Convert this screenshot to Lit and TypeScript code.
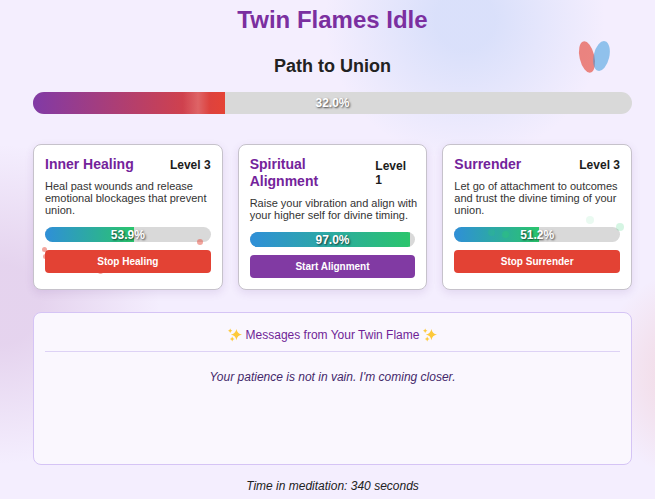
import { LitElement, html, css, svg } from "lit";
import { customElement, property, state } from "lit/decorators.js";
import { classMap } from "lit/directives/class-map.js";
import { styleMap } from "lit/directives/style-map.js";

interface Particle {
  x: number;
  y: number;
  size: number;
  alpha: number;
}

interface Practice {
  title: string;
  level: number;
  description: string;
  progress: number;
  action: string;
  active: boolean;
  tone: "red" | "green";
  particles: Particle[];
}

@customElement("progress-bar")
class ProgressBar extends LitElement {
  @property({ type: Number }) value = 0;
  @property({ type: Boolean }) large = false;
  @property() label = "";

  static styles = css`
    :host {
      display: block;
    }
    .track {
      display: grid;
      height: 15px;
      border-radius: 11px;
      background: #d9d9d9;
      overflow: hidden;
    }
    .track.large {
      height: 22px;
    }
    .fill,
    .value {
      grid-area: 1 / 1;
    }
    .fill {
      background: linear-gradient(90deg, #2f8fd8, #2ac56c);
    }
    .large .fill {
      background:
        linear-gradient(90deg, transparent 78%, rgba(255, 255, 255, 0.18) 86%, transparent 92%),
        linear-gradient(90deg, #813aa6, #e54335);
    }
    .value {
      place-self: center;
      color: #fff;
      font-size: 12px;
      line-height: 14px;
      font-weight: bold;
      text-shadow: 1px 1px 2px rgba(0, 0, 0, 0.7);
    }
  `;

  render() {
    return html`
      <div
        class=${classMap({ track: true, large: this.large })}
        role="progressbar"
        aria-label=${this.label}
        aria-valuenow=${this.value}
        aria-valuemin="0"
        aria-valuemax="100"
      >
        <div class="fill" style=${styleMap({ width: `${this.value}%` })}></div>
        <span class="value">${this.value.toFixed(1)}%</span>
      </div>
    `;
  }
}

@customElement("practice-card")
class PracticeCard extends LitElement {
  @property({ attribute: false }) practice!: Practice;

  static styles = css`
    :host {
      display: block;
      min-width: 0;
    }
    .card {
      position: relative;
      box-sizing: border-box;
      height: 100%;
      padding: 11px;
      border: 1px solid #c6c2cb;
      border-radius: 8px;
      background: #fff;
      box-shadow: 0 3px 8px rgba(100, 50, 140, 0.12);
    }
    .head {
      display: flex;
      justify-content: space-between;
      align-items: center;
      margin-bottom: 7px;
    }
    h3 {
      margin: 0;
      color: #74239b;
      font-size: 14px;
      line-height: 17px;
    }
    .level {
      color: #1c1c1c;
      font-size: 12px;
      line-height: 14px;
      font-weight: bold;
    }
    .description {
      margin: 0 -6px 11px 0;
      color: #333;
      font-size: 11px;
      line-height: 12px;
    }
    button {
      position: relative;
      display: block;
      width: 100%;
      height: 23px;
      margin-top: 8px;
      padding: 0;
      border: 0;
      border-radius: 4px;
      background: #813aa3;
      color: #fff;
      font: bold 10px/12px "Liberation Sans", Arial, sans-serif;
      cursor: pointer;
    }
    button.active {
      background: #e34234;
    }
    .particle {
      position: absolute;
      border-radius: 50%;
      pointer-events: none;
    }
    .red {
      background: #e74c3c;
    }
    .green {
      background: #2ecc71;
    }
  `;

  private toggle() {
    this.dispatchEvent(new CustomEvent("toggle-practice"));
  }

  render() {
    const p = this.practice;
    return html`
      <article class="card">
        <div class="head">
          <h3>${p.title}</h3>
          <span class="level">Level ${p.level}</span>
        </div>
        <p class="description">${p.description}</p>
        <progress-bar .value=${p.progress} .label=${p.title}></progress-bar>
        ${p.particles.map(
          (d) => html`<span
            class="particle ${p.tone}"
            style=${styleMap({
              left: `${d.x}%`,
              top: `${d.y}%`,
              width: `${d.size}px`,
              height: `${d.size}px`,
              opacity: `${d.alpha}`,
            })}
          ></span>`
        )}
        <button type="button" class=${classMap({ active: p.active })} @click=${this.toggle}>
          ${p.active ? "Stop" : "Start"} ${p.action}
        </button>
      </article>
    `;
  }
}

const star = (cx: number, cy: number, r: number) => {
  const k = r * 0.14;
  return svg`<path fill="#fdc93b" d="M${cx} ${cy - r}Q${cx + k} ${cy - k} ${cx + r} ${cy}Q${cx + k} ${cy + k} ${cx} ${cy + r}Q${cx - k} ${cy + k} ${cx - r} ${cy}Q${cx - k} ${cy - k} ${cx} ${cy - r}Z" />`;
};

const sparkles = html`
  <svg class="sparkles" viewBox="0 0 14 14" aria-hidden="true">
    ${star(8.4, 6.6, 5.6)} ${star(2.2, 2.8, 2.2)} ${star(4.2, 11, 2.4)}
  </svg>
`;

@customElement("app-root")
class AppRoot extends LitElement {
  @state() private practices: Practice[] = [
    {
      title: "Inner Healing",
      level: 3,
      description: "Heal past wounds and release emotional blockages that prevent union.",
      progress: 53.9,
      action: "Healing",
      active: true,
      tone: "red",
      particles: [
        { x: 4, y: 71, size: 5, alpha: 0.5 },
        { x: 5, y: 76, size: 5, alpha: 0.5 },
        { x: 87, y: 65, size: 6, alpha: 0.5 },
        { x: 34, y: 86, size: 5, alpha: 0.5 },
      ],
    },
    {
      title: "Spiritual Alignment",
      level: 1,
      description: "Raise your vibration and align with your higher self for divine timing.",
      progress: 97,
      action: "Alignment",
      active: false,
      tone: "green",
      particles: [],
    },
    {
      title: "Surrender",
      level: 3,
      description: "Let go of attachment to outcomes and trust the divine timing of your union.",
      progress: 51.2,
      action: "Surrender",
      active: true,
      tone: "green",
      particles: [
        { x: 76, y: 49, size: 8, alpha: 0.1 },
        { x: 92, y: 54, size: 8, alpha: 0.2 },
        { x: 24, y: 58, size: 7, alpha: 0.2 },
        { x: 31, y: 60, size: 7, alpha: 0.3 },
      ],
    },
  ];

  static styles = css`
    :host {
      display: block;
      box-sizing: border-box;
      min-height: 100vh;
      padding: 4px 23px 6px 33px;
      color: #222;
      font-family: "Liberation Sans", Arial, sans-serif;
      font-size: 12px;
      line-height: 14px;
      background:
        radial-gradient(circle at 71% 4%, rgba(135, 180, 240, 0.24) 30px, rgba(135, 180, 240, 0) 140px),
        radial-gradient(circle at 0% 61%, rgba(155, 80, 160, 0.17) 40px, rgba(155, 80, 160, 0) 160px),
        radial-gradient(circle at 108% 75%, rgba(231, 110, 90, 0.16) 30px, rgba(231, 110, 90, 0) 110px),
        #f4eefe;
    }
    h1,
    h2,
    p {
      margin: 0;
      text-align: center;
    }
    h1 {
      color: #7b2fa0;
      font-size: 24px;
      line-height: 32px;
    }
    .path {
      margin-top: 20px;
    }
    .path h2 {
      margin-bottom: 15px;
      font-size: 18px;
      line-height: 21px;
    }
    .flames {
      position: absolute;
      top: 39px;
      right: 43px;
      width: 36px;
      height: 36px;
    }
    .practices {
      display: grid;
      grid-template-columns: repeat(3, minmax(0, 1fr));
      gap: 15px;
      margin-top: 30px;
    }
    .messages {
      box-sizing: border-box;
      min-height: 153px;
      margin-top: 22px;
      padding: 15px 11px;
      border: 1px solid #d5c4f5;
      border-radius: 8px;
      background: #faf7fe;
    }
    .messages h2 {
      display: flex;
      justify-content: center;
      align-items: center;
      gap: 4px;
      padding-bottom: 9px;
      border-bottom: 1px solid #ddd2f5;
      color: #6f1f96;
      font-size: 12px;
      line-height: 14px;
      font-weight: normal;
    }
    .sparkles {
      width: 14px;
      height: 14px;
    }
    .message {
      margin-top: 18px;
      color: #44286a;
      font-style: italic;
    }
    .time {
      margin-top: 14px;
      font-style: italic;
    }
  `;

  private toggle(index: number) {
    this.practices = this.practices.map((p, i) => (i === index ? { ...p, active: !p.active } : p));
  }

  render() {
    return html`
      <header><h1>Twin Flames Idle</h1></header>
      <svg class="flames" viewBox="0 0 36 36" aria-hidden="true">
        <ellipse cx="11" cy="18" rx="7.4" ry="16" transform="rotate(-13 11 18)" fill="#e74c3c" opacity="0.65" />
        <ellipse cx="25.5" cy="17" rx="7.8" ry="15.2" transform="rotate(13 25.5 17)" fill="#3498db" opacity="0.52" />
      </svg>
      <main>
        <section class="path">
          <h2>Path to Union</h2>
          <progress-bar large .value=${32} label="Path to Union"></progress-bar>
        </section>
        <section class="practices">
          ${this.practices.map(
            (p, i) => html`<practice-card .practice=${p} @toggle-practice=${() => this.toggle(i)}></practice-card>`
          )}
        </section>
        <section class="messages">
          <h2>${sparkles}<span>Messages from Your Twin Flame</span>${sparkles}</h2>
          <p class="message">Your patience is not in vain. I'm coming closer.</p>
        </section>
      </main>
      <footer><p class="time">Time in meditation: 340 seconds</p></footer>
    `;
  }
}
